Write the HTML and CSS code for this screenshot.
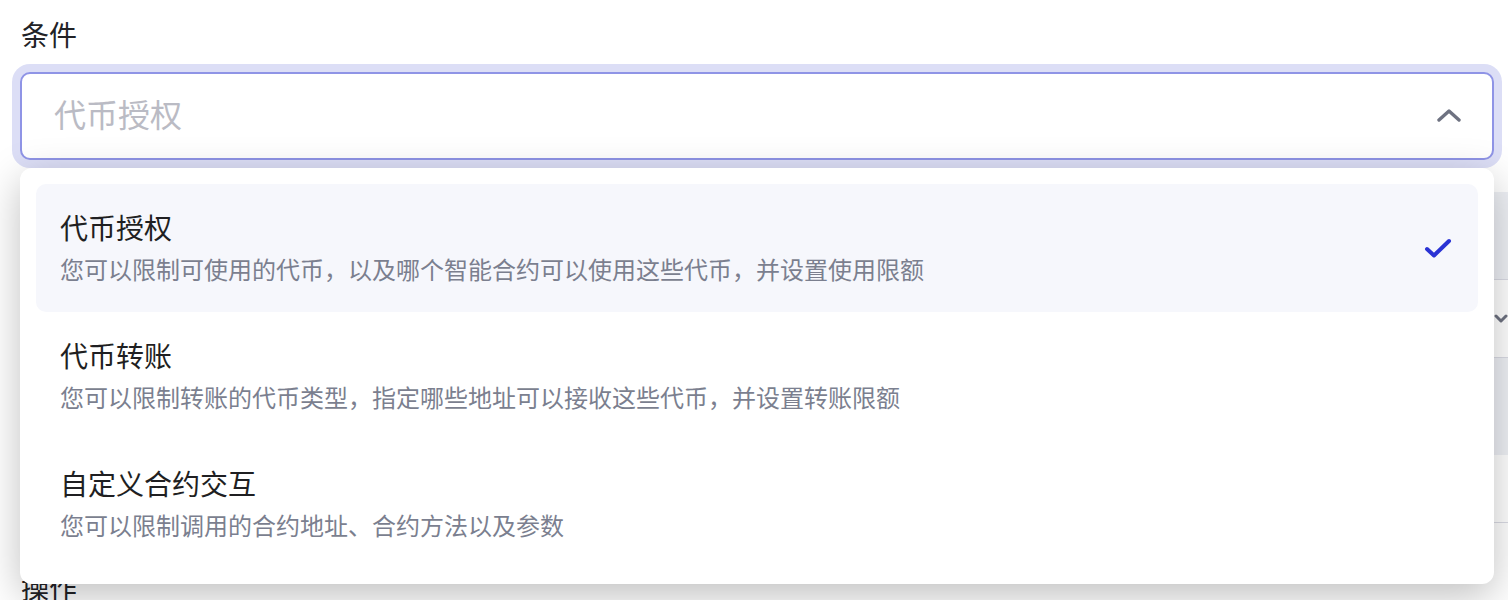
FILE: index.html
```html
<!DOCTYPE html>
<html>
<head>
	<meta charset="utf-8">
	<title>条件</title>
	<link rel="stylesheet" href="styles.css">
</head>
<body>
	<div class="page">
		<div class="field">
			<label class="field-label">条件</label>
			<div class="select-wrap">
				<div class="select is-open">
					<span class="select-placeholder">代币授权</span>
					<svg class="select-arrow" width="24" height="14" viewBox="0 0 24 14">
						<path d="M2 12 L12 3 L22 12" fill="none" stroke="#6e7281" stroke-width="3.4" stroke-linecap="round" stroke-linejoin="round"/>
					</svg>
				</div>
				<div class="dropdown">
					<div class="option is-selected">
						<div class="option-text">
							<div class="option-title">代币授权</div>
							<div class="option-desc">您可以限制可使用的代币，以及哪个智能合约可以使用这些代币，并设置使用限额</div>
						</div>
						<svg class="option-check" width="28" height="22" viewBox="0 0 28 22">
							<path d="M3 12 L10 18.5 L25 4" fill="none" stroke="#2a33d4" stroke-width="4" stroke-linecap="round" stroke-linejoin="round"/>
						</svg>
					</div>
					<div class="option">
						<div class="option-text">
							<div class="option-title">代币转账</div>
							<div class="option-desc">您可以限制转账的代币类型，指定哪些地址可以接收这些代币，并设置转账限额</div>
						</div>
					</div>
					<div class="option">
						<div class="option-text">
							<div class="option-title">自定义合约交互</div>
							<div class="option-desc">您可以限制调用的合约地址、合约方法以及参数</div>
						</div>
					</div>
				</div>
			</div>
		</div>

		<!-- form rows that sit under the open menu -->
		<div class="under">
			<div class="under-row tinted"></div>
			<div class="under-row">
				<svg class="under-arrow" width="14" height="10" viewBox="0 0 14 10">
					<path d="M2 2 L7 7 L12 2" fill="none" stroke="#6e7281" stroke-width="3" stroke-linecap="round" stroke-linejoin="round"/>
				</svg>
			</div>
			<div class="under-row tinted tall"></div>
			<div class="under-row short"></div>
		</div>

		<div class="field">
			<label class="field-label">操作</label>
		</div>
	</div>
</body>
</html>
```

FILE: styles.css
```css
html, body {
	margin: 0;
	padding: 0;
	background: #ffffff;
	overflow: hidden;
}
* {
	box-sizing: border-box;
}
body {
	font-family: "Noto Sans CJK SC", "Noto Sans", sans-serif;
	color: #1f1f22;
}
.page {
	padding: 14px 14px 0 20px;
}
.field-label {
	display: block;
	font-size: 28px;
	line-height: 40px;
	color: #222226;
	padding-left: 1px;
}
.select-wrap {
	position: relative;
	margin-top: 18px;
}
.select {
	height: 88px;
	border: 2px solid #8f94e6;
	border-radius: 10px;
	box-shadow: 0 0 0 8px #dcdef6;
	background: #ffffff;
	display: flex;
	align-items: center;
	justify-content: space-between;
	padding: 0 31px 6px 32px;
}
.select-placeholder {
	font-size: 32px;
	line-height: 44px;
	color: #babbc4;
}
.select-arrow {
	display: block;
	margin-top: 4px;
}
.dropdown {
	position: absolute;
	top: 96px;
	left: 0;
	right: 0;
	z-index: 5;
	background: #ffffff;
	border-radius: 12px;
	padding: 16px;
	box-shadow: 0 12px 40px rgba(0, 0, 0, 0.25);
}
.option {
	display: flex;
	align-items: center;
	justify-content: space-between;
	height: 128px;
	padding: 0 26px 3px 24px;
	border-radius: 10px;
}
.option.is-selected {
	background: #f6f7fc;
}
.option-title {
	font-size: 28px;
	line-height: 40px;
	color: #1f1f22;
}
.option-desc {
	margin-top: 4px;
	font-size: 24px;
	line-height: 36px;
	color: #7b7f8f;
}
.option-check {
	display: block;
	margin-top: 3px;
}
.under {
	margin-top: 32px;
	margin-right: -30px;
	margin-left: 20px;
}
.under-row {
	height: 78px;
	border-bottom: 1px solid #dadbe4;
	display: flex;
	align-items: center;
	justify-content: flex-end;
	padding-right: 16px;
}
.under-row.tinted {
	background: #eef0f5;
	height: 88px;
}
.under-row.tall {
	height: 97px;
	border-bottom: none;
}
.under-row.short {
	height: 68px;
}
.under-arrow {
	display: block;
}
.under + .field {
	margin-top: 44px;
}
```
